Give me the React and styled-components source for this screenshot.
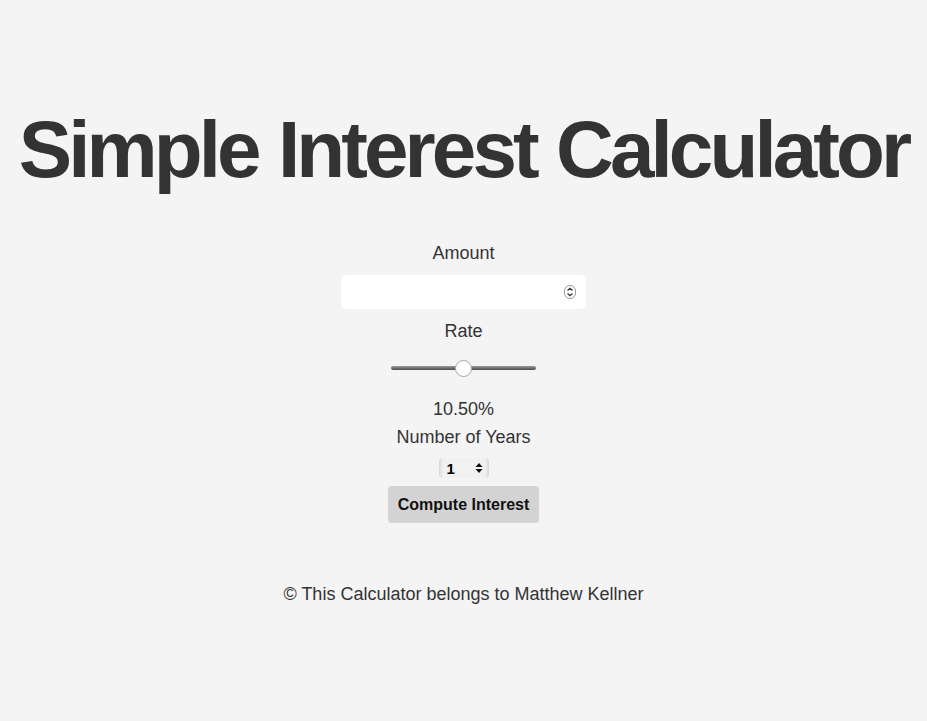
import React, { useState } from "react";
import styled, { createGlobalStyle } from "styled-components";

const GlobalStyle = createGlobalStyle`
  html, body {
    margin: 0;
    padding: 0;
    background: #f4f4f4;
  }
  body {
    font-family: "Liberation Sans", Arial, sans-serif;
    color: #333;
  }
`;

const App = () => {
  const [amount, setAmount] = useState("");
  const [rate, setRate] = useState(10.5);
  const [years, setYears] = useState("1");

  return (
    <>
      <GlobalStyle />
      <SPage>
        <STitle>Simple Interest Calculator</STitle>
        <SForm onSubmit={(e) => e.preventDefault()}>
          <SLabel>Amount</SLabel>
          <SAmountWrap>
            <SAmountInput
              type="text"
              value={amount}
              onChange={(e) => setAmount(e.target.value)}
            />
            <SSpinner viewBox="0 0 12 14">
              <rect x="0.5" y="0.5" width="11" height="13" rx="5.5" fill="#fff" stroke="#999" />
              <path d="M3.5 5.5 L6 3.2 L8.5 5.5" fill="none" stroke="#333" strokeWidth="1.2" />
              <path d="M3.5 8.5 L6 10.8 L8.5 8.5" fill="none" stroke="#333" strokeWidth="1.2" />
            </SSpinner>
          </SAmountWrap>
          <SLabel>Rate</SLabel>
          <SRange
            type="range"
            min="1"
            max="20"
            step="0.25"
            value={rate}
            onChange={(e) => setRate(parseFloat(e.target.value))}
          />
          <SLabel>{rate.toFixed(2)}%</SLabel>
          <SLabel>Number of Years</SLabel>
          <SSelectWrap>
            <SSelect value={years} onChange={(e) => setYears(e.target.value)}>
              {Array.from({ length: 10 }, (_, i) => (
                <option key={i + 1} value={i + 1}>
                  {i + 1}
                </option>
              ))}
            </SSelect>
            <SSelectArrows viewBox="0 0 8 12">
              <path d="M4 1 L7.5 5 L0.5 5 Z" fill="#111" />
              <path d="M4 11 L7.5 7 L0.5 7 Z" fill="#111" />
            </SSelectArrows>
          </SSelectWrap>
          <SButton type="submit">Compute Interest</SButton>
        </SForm>
        <SFooter>© This Calculator belongs to Matthew Kellner</SFooter>
      </SPage>
    </>
  );
};

export default App;

const SPage = styled.div`
  display: flex;
  flex-direction: column;
  align-items: center;
  min-height: 721px;
  box-sizing: border-box;
  padding-top: 104px;
`;

const STitle = styled.h1`
  margin: 0;
  font-size: 80px;
  font-weight: 700;
  line-height: 92px;
  letter-spacing: -3.9px;
  word-spacing: 2px;
  color: #333;
  white-space: nowrap;
`;

const SForm = styled.form`
  display: flex;
  flex-direction: column;
  align-items: center;
  margin-top: 43px;
`;

const SLabel = styled.div`
  font-size: 18px;
  line-height: 28px;
  color: #333;
`;

const SAmountWrap = styled.div`
  position: relative;
  margin-top: 8px;
  margin-bottom: 8px;
`;

const SAmountInput = styled.input`
  display: block;
  width: 245px;
  height: 34px;
  box-sizing: border-box;
  border: none;
  border-radius: 5px;
  background: #fff;
  padding: 0 28px 0 10px;
  font-size: 15px;
  font-family: inherit;
  outline: none;
`;

const SSpinner = styled.svg`
  position: absolute;
  right: 10px;
  top: 9px;
  width: 12px;
  height: 16px;
  pointer-events: none;
`;

const SRange = styled.input`
  -webkit-appearance: none;
  appearance: none;
  width: 145px;
  height: 20px;
  margin: 13px 0 17px;
  background: transparent;

  &::-webkit-slider-runnable-track {
    height: 4px;
    border-radius: 2px;
    background: linear-gradient(#9a9a9a, #4a4a4a);
  }

  &::-webkit-slider-thumb {
    -webkit-appearance: none;
    width: 17px;
    height: 17px;
    margin-top: -6.5px;
    border-radius: 50%;
    background: #fff;
    border: 1px solid #a8a8a8;
    box-sizing: border-box;
  }
`;

const SSelectWrap = styled.div`
  position: relative;
  margin-top: 7px;
`;

const SSelect = styled.select`
  -webkit-appearance: none;
  appearance: none;
  display: block;
  width: 50px;
  height: 20px;
  box-sizing: border-box;
  border: none;
  border-radius: 4px;
  padding: 0 0 0 8px;
  background: linear-gradient(to right, #d6d6d6 0, #f1f1f1 4px, #f1f1f1 calc(100% - 4px), #d6d6d6 100%);
  font-family: "Liberation Sans", Arial, sans-serif;
  font-weight: 700;
  font-size: 15px;
  color: #000;
  outline: none;
`;

const SSelectArrows = styled.svg`
  position: absolute;
  right: 6px;
  top: 4px;
  width: 8px;
  height: 12px;
  pointer-events: none;
`;

const SButton = styled.button`
  margin-top: 8px;
  width: 151px;
  height: 37px;
  border: none;
  border-radius: 4px;
  background: #d3d3d3;
  font-family: "Liberation Sans", Arial, sans-serif;
  font-size: 16px;
  font-weight: 700;
  color: #111;
  cursor: pointer;
`;

const SFooter = styled.div`
  margin-top: 57px;
  font-size: 18px;
  line-height: 28px;
  color: #333;
`;
